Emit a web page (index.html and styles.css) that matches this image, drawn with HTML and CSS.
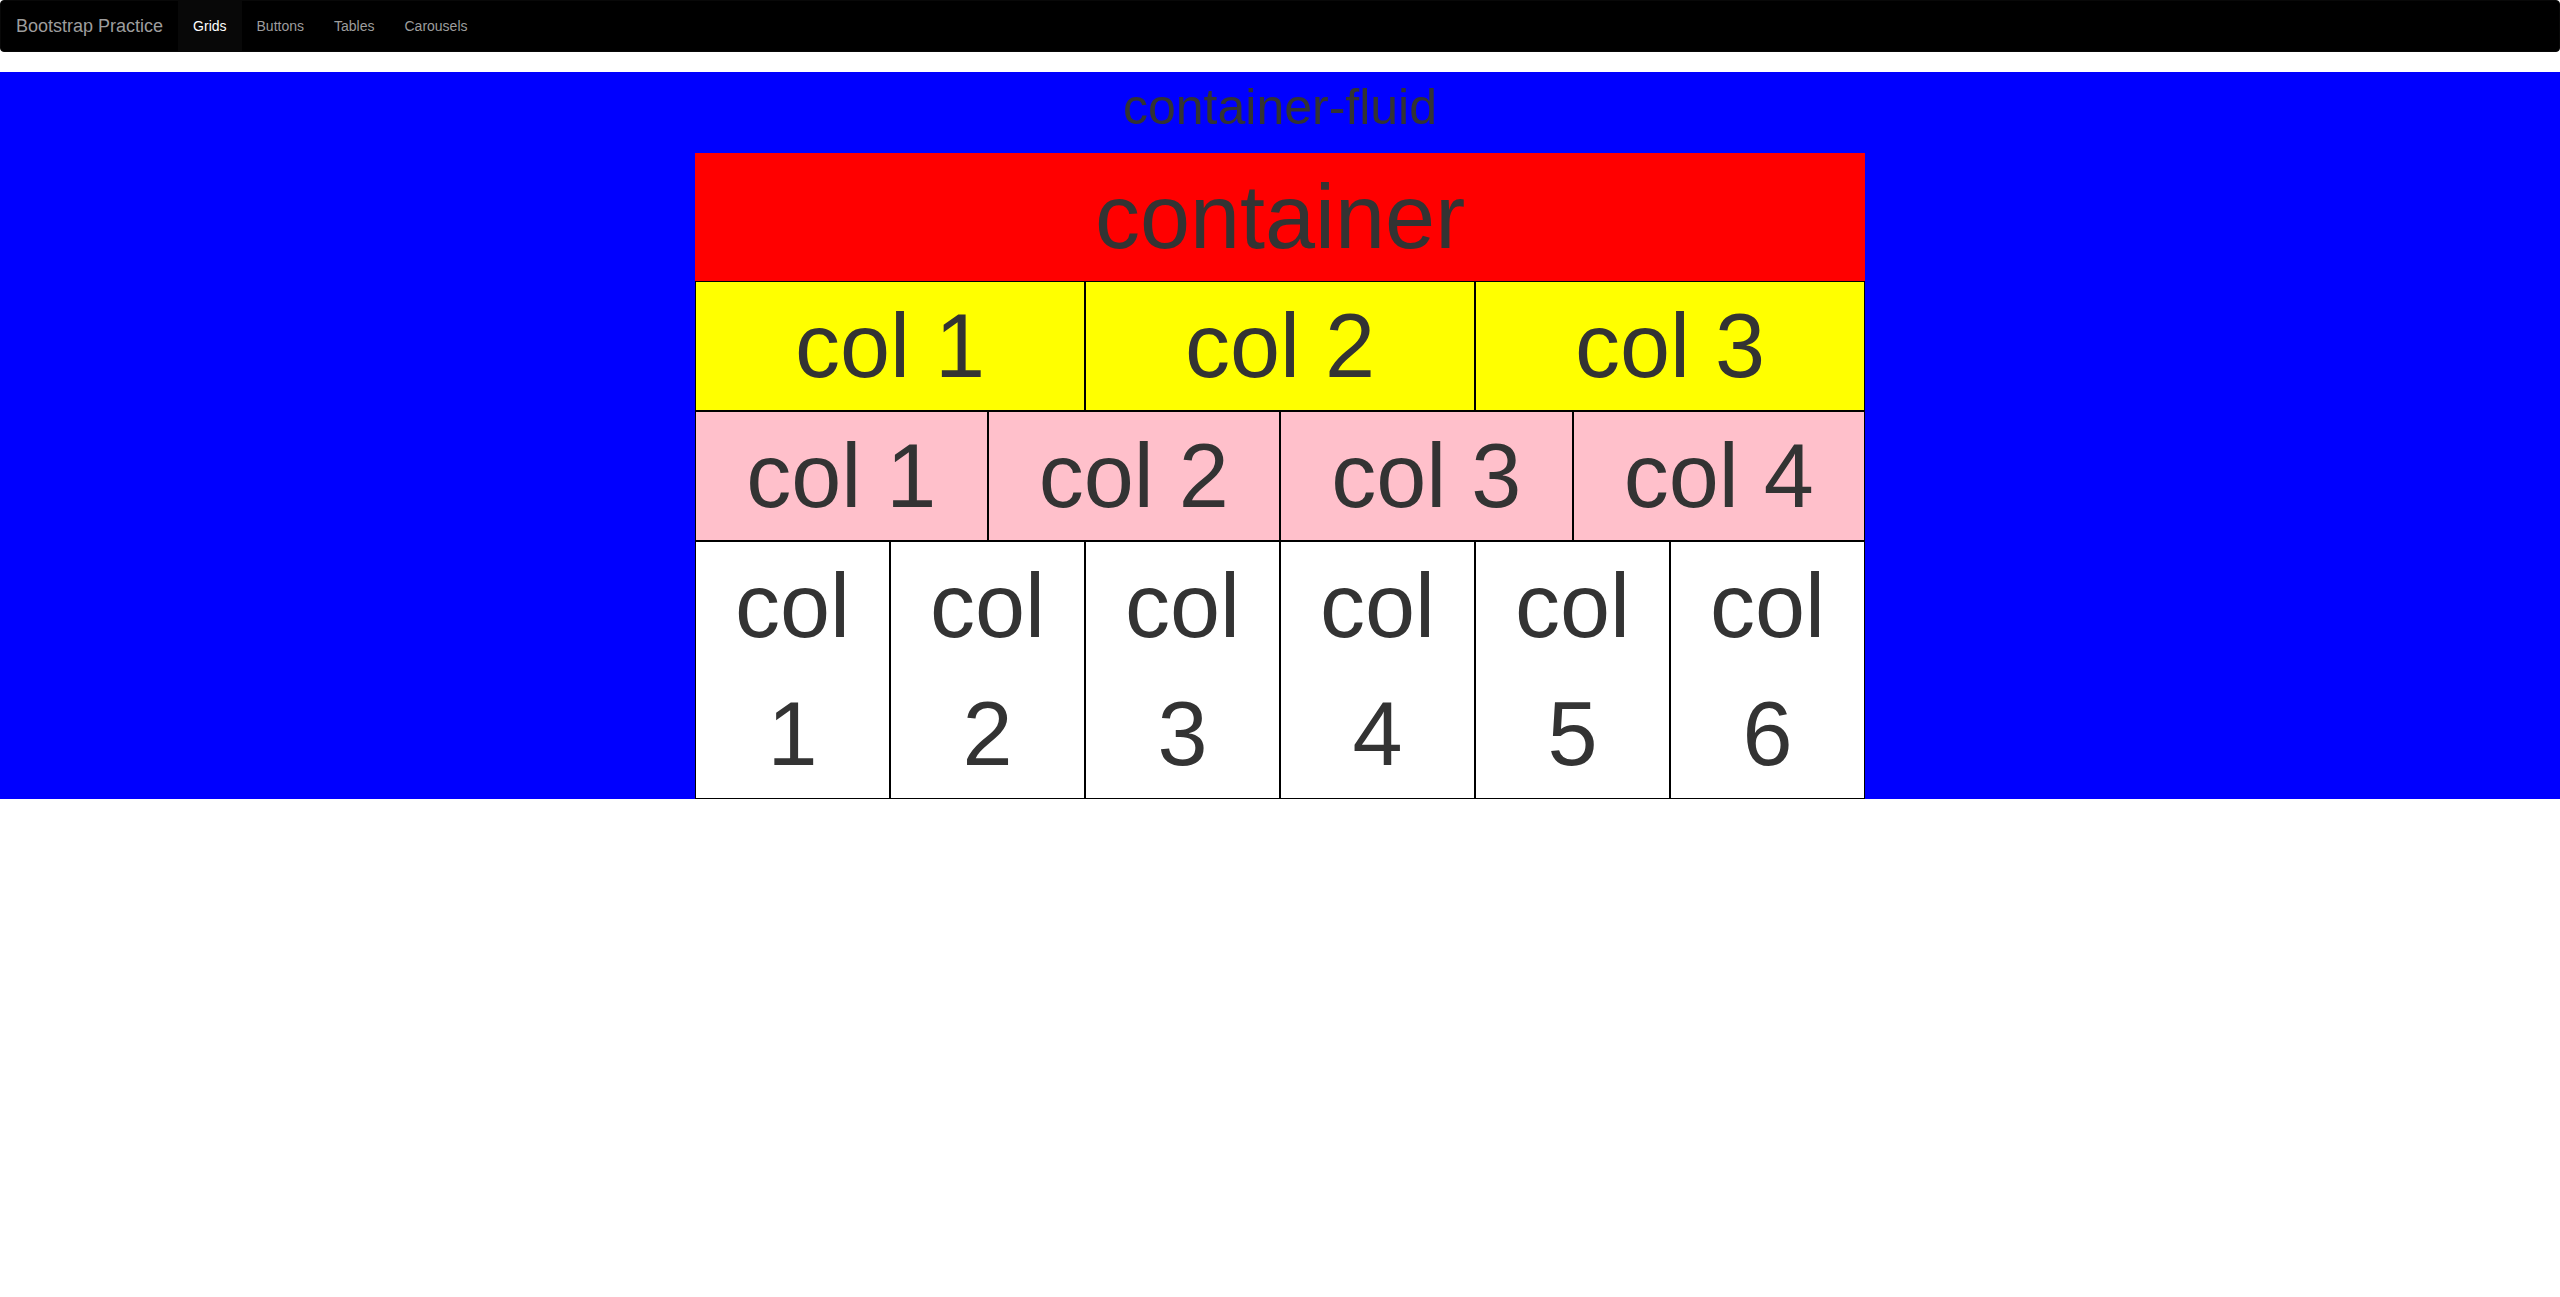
FILE: index.html
```html
<!DOCTYPE html>
<html lang="en">
<head>
  <meta charset="utf-8">
  <meta name="viewport" content="width=device-width, initial-scale=1">
  <title>Bootstrap Practice</title>
  <link rel="stylesheet" href="styles.css">
</head>
<body>
  <nav class="navbar">
    <a class="navbar-brand" href="#">Bootstrap Practice</a>
    <ul class="navbar-nav">
      <li><a class="nav-link active" href="#">Grids</a></li>
      <li><a class="nav-link" href="#">Buttons</a></li>
      <li><a class="nav-link" href="#">Tables</a></li>
      <li><a class="nav-link" href="#">Carousels</a></li>
    </ul>
  </nav>

  <main class="container-fluid">
    <p class="fluid-title">container-fluid</p>
    <div class="container">
      <div class="container-title">container</div>
      <div class="row row-3">
        <div class="col">col 1</div>
        <div class="col">col 2</div>
        <div class="col">col 3</div>
      </div>
      <div class="row row-4">
        <div class="col">col 1</div>
        <div class="col">col 2</div>
        <div class="col">col 3</div>
        <div class="col">col 4</div>
      </div>
      <div class="row row-6">
        <div class="col">col 1</div>
        <div class="col">col 2</div>
        <div class="col">col 3</div>
        <div class="col">col 4</div>
        <div class="col">col 5</div>
        <div class="col">col 6</div>
      </div>
    </div>
  </main>
</body>
</html>
```
FILE: styles.css
```css
* {
  box-sizing: border-box;
}

body {
  margin: 0;
  background: #fff;
  color: #333;
  font-family: "Helvetica Neue", Helvetica, Arial, "Liberation Sans", sans-serif;
  font-size: 14px;
  line-height: 20px;
}

.navbar {
  display: flex;
  margin-bottom: 20px;
  border: 1px solid #080808;
  border-radius: 4px;
  background: #000;
}

.navbar-brand,
.nav-link {
  display: block;
  padding: 15px;
  color: #9d9d9d;
  text-decoration: none;
}

.navbar-brand {
  font-size: 18px;
}

.navbar-nav {
  display: flex;
  margin: 0;
  padding: 0;
  list-style: none;
}

.nav-link.active {
  background: #080808;
  color: #fff;
}

.container-fluid {
  padding: 0 15px;
  background: blue;
  text-align: center;
}

.fluid-title {
  margin: 0 0 10px;
  font-size: 50px;
  line-height: 71px;
}

.container {
  max-width: 1170px;
  margin: 0 auto;
  background: red;
  font-size: 90px;
  line-height: 128px;
}

.row {
  display: grid;
}

.row-3 {
  grid-template-columns: repeat(3, 1fr);
  background: yellow;
}

.row-4 {
  grid-template-columns: repeat(4, 1fr);
  background: pink;
}

.row-6 {
  grid-template-columns: repeat(6, 1fr);
  background: white;
}

.col {
  min-width: 0;
  padding: 0 15px;
  border: 1px solid #000;
}
```
